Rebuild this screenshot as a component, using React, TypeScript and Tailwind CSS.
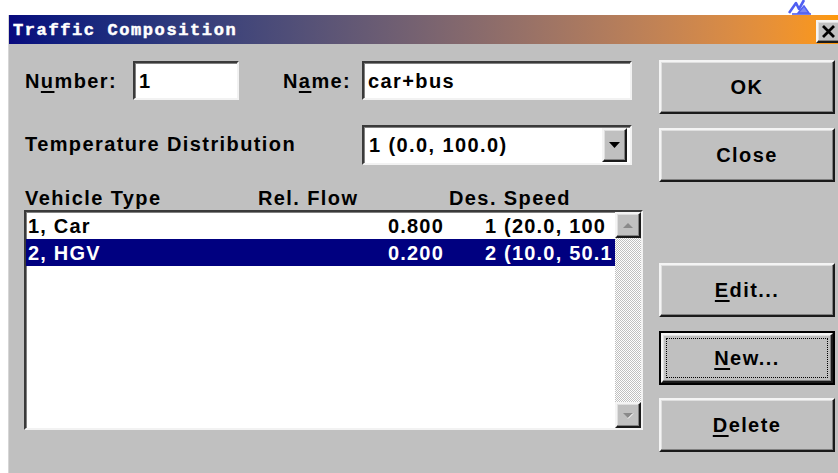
import React from "react";

const raised =
  "border-2 border-t-[#f4f4f4] border-l-[#f4f4f4] border-r-[#1a1a1a] border-b-[#1a1a1a] shadow-[inset_-1px_-1px_#808080,inset_1px_1px_#dfdfdf]";
const sunken =
  "border-2 border-t-[#3a3a3a] border-l-[#3a3a3a] border-r-[#f2f2f2] border-b-[#f2f2f2] shadow-[inset_1px_1px_#808080]";

function Button({
  children,
  isDefault = false,
  className = "",
}: {
  children: React.ReactNode;
  isDefault?: boolean;
  className?: string;
}) {
  if (isDefault) {
    return (
      <div className={`h-[54px] w-[176px] border-2 border-black bg-[#c0c0c0] ${className}`}>
        <div className={`h-full w-full ${raised} flex items-center justify-center p-[3px]`}>
          <div className="h-full w-full border border-dotted border-black flex items-center justify-center text-[20px] font-bold tracking-[1.4px] text-black">
            {children}
          </div>
        </div>
      </div>
    );
  }
  return (
    <div
      className={`h-[54px] w-[176px] bg-[#c0c0c0] ${raised} flex items-center justify-center text-[20px] font-bold tracking-[1.4px] text-black ${className}`}
    >
      {children}
    </div>
  );
}

function ScrollArrow({ up }: { up: boolean }) {
  return (
    <div className={`h-[26px] w-[26px] shrink-0 bg-[#c0c0c0] ${raised} flex items-center justify-center`}>
      <svg width="12" height="7" viewBox="0 0 12 7">
        {up ? (
          <polygon points="1,6 11,6 6,1" fill="#8a8a8a" />
        ) : (
          <polygon points="1,1 11,1 6,6" fill="#8a8a8a" />
        )}
        {up ? null : <line x1="6" y1="6.5" x2="11" y2="1.5" stroke="#ffffff" strokeWidth="1" />}
      </svg>
    </div>
  );
}

// the speed column is narrower than its values, so each shows only its head
const rows = [
  { type: "1, Car", flow: "0.800", speed: "1 (20.0, 100", selected: false },
  { type: "2, HGV", flow: "0.200", speed: "2 (10.0, 50.1", selected: true },
];

export default function App() {
  return (
    <div className="w-[838px] h-[473px] overflow-hidden bg-white flex flex-col font-['Liberation_Sans',Arial,sans-serif]">
      {/* strip above the window */}
      <div className="h-[15px] shrink-0 flex justify-end pr-[26px]">
        <svg width="24" height="15" viewBox="0 0 24 15">
          <path
            d="M1 13 L8 3 L11 9 L16 0"
            fill="none"
            stroke="#4f5ef2"
            strokeWidth="2.6"
            strokeLinejoin="round"
          />
          <path d="M10 13 L16 6 L21 13 Z" fill="#7d88f5" stroke="#4f5ef2" strokeWidth="1.4" />
          <path d="M4 14 L23 14" stroke="#4f5ef2" strokeWidth="1.6" />
        </svg>
      </div>

      {/* dialog window */}
      <div className="flex-1 ml-[8px] w-[834px] shrink-0 border-l border-[#d6d6d6] flex flex-col">
        {/* title bar */}
        <div className="h-[29px] shrink-0 flex items-center justify-between bg-gradient-to-r from-[#08087e] to-[#ff9900]">
          <span className="pl-[4px] pt-[3px] text-white font-bold text-[17px] tracking-[1.6px] [-webkit-text-stroke:0.5px_white] font-['Liberation_Mono','Courier_New',monospace]">
            Traffic Composition
          </span>
          <div className={`h-[23px] w-[28px] -mr-[2px] mt-[3px] bg-[#c0c0c0] ${raised} flex items-center justify-start pl-[3px]`}>
            <svg width="15" height="13" viewBox="0 0 15 13">
              <path d="M2 1 L13 12 M13 1 L2 12" stroke="#000" strokeWidth="2.8" />
            </svg>
          </div>
        </div>

        {/* dialog body */}
        <div className="flex-1 bg-[#c0c0c0] flex pl-[15px] pt-[16px] text-black">
          {/* form column */}
          <div className="w-[619px] shrink-0 flex flex-col mt-[1px]">
            <div className="flex items-center h-[39px]">
              <div className="w-[109px] pl-[1px] text-[20px] font-bold tracking-[1.4px]">
                N<span className="underline underline-offset-[3px]">u</span>mber:
              </div>
              <div className={`w-[106px] h-full bg-white ${sunken} flex items-center pl-[4px] text-[20px] font-bold`}>
                1
              </div>
              <div className="ml-[44px] w-[79px] text-[20px] font-bold tracking-[1.4px]">
                N<span className="underline underline-offset-[3px]">a</span>me:
              </div>
              <div className={`w-[270px] h-full bg-white ${sunken} flex items-center pl-[4px] text-[20px] font-bold tracking-[1.4px]`}>
                car+bus
              </div>
            </div>

            <div className="flex items-center h-[40px] mt-[25px]">
              <div className="w-[338px] pl-[1px] text-[20px] font-bold tracking-[1.4px] -mt-[3px]">
                Temperature Distribution
              </div>
              <div className={`w-[270px] h-full bg-white ${sunken} flex items-center p-[1px]`}>
                <span className="flex-1 pl-[4px] text-[20px] font-bold tracking-[1.4px]">1 (0.0, 100.0)</span>
                <div className={`h-[34px] w-[25px] mr-[2px] bg-[#c0c0c0] ${raised} flex items-center justify-center`}>
                  <svg width="11" height="6" viewBox="0 0 11 6">
                    <polygon points="0,0 11,0 5.5,6" fill="#000" />
                  </svg>
                </div>
              </div>
            </div>

            <div className="flex items-center h-[25px] mt-[20px] text-[20px] font-bold tracking-[1.4px]">
              <div className="w-[234px] pl-[1px]">Vehicle Type</div>
              <div className="w-[191px]">Rel. Flow</div>
              <div>Des. Speed</div>
            </div>

            {/* vehicle list */}
            <div className={`h-[220px] w-[619px] bg-white ${sunken} flex`}>
              <div className="flex-1 flex flex-col overflow-hidden">
                {rows.map((r) => (
                  <div
                    key={r.type}
                    className={`h-[27px] flex items-center whitespace-nowrap text-[20px] font-bold tracking-[1.2px] ${
                      r.selected ? "bg-[#000080] text-white" : "text-black"
                    }`}
                  >
                    <div className="w-[300px] shrink-0 pl-[2px]">{r.type}</div>
                    <div className="w-[118px] shrink-0 text-right">{r.flow}</div>
                    <div className="pl-[41px]">{r.speed}</div>
                  </div>
                ))}
              </div>
              <div className="w-[26px] shrink-0 flex flex-col bg-[image:repeating-conic-gradient(#c0c0c0_0%_25%,#ffffff_0%_50%)] bg-[length:2px_2px]">
                <ScrollArrow up />
                <div className="flex-1" />
                <ScrollArrow up={false} />
              </div>
            </div>
          </div>

          {/* button column */}
          <div className="ml-[16px] flex flex-col">
            <Button>OK</Button>
            <Button className="mt-[14px]">Close</Button>
            <Button className="mt-[81px]">
              <span className="underline underline-offset-[3px]">E</span>dit...
            </Button>
            <Button isDefault className="mt-[14px]">
              <span className="underline underline-offset-[3px]">N</span>ew...
            </Button>
            <Button className="mt-[13px]">
              <span className="underline underline-offset-[3px]">D</span>elete
            </Button>
          </div>
        </div>
      </div>
    </div>
  );
}
